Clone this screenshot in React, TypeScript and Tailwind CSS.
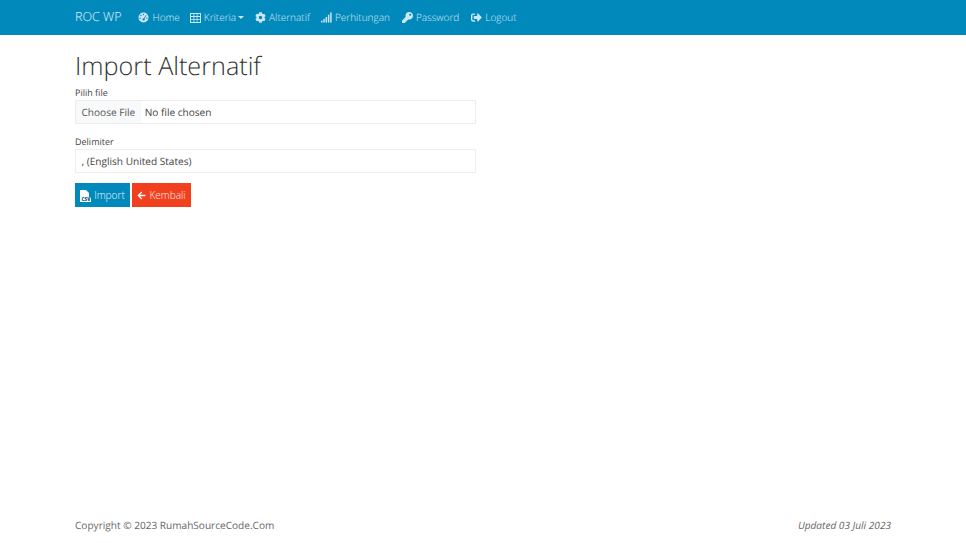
import { FaCog, FaKey, FaSignOutAlt, FaArrowLeft } from "react-icons/fa";
import type { ReactNode } from "react";

function GaugeIcon() {
  return (
    <svg viewBox="0 0 12 12" className="h-[11px] w-[11px]" fill="currentColor">
      <path fillRule="evenodd" d="M6 .5a5.5 5.5 0 1 1 0 11 5.5 5.5 0 0 1 0-11ZM6 2a.8.8 0 1 0 0 1.6A.8.8 0 0 0 6 2ZM3.2 3.1a.8.8 0 1 0 0 1.6.8.8 0 0 0 0-1.6ZM2.3 5.9a.8.8 0 1 0 0 1.6.8.8 0 0 0 0-1.6ZM9.7 5.9a.8.8 0 1 0 0 1.6.8.8 0 0 0 0-1.6ZM8.9 3 6.3 6.7a1.3 1.3 0 1 0 .9.5L9.4 3.3Z" />
    </svg>
  );
}

function GridIcon() {
  return (
    <svg viewBox="0 0 11 10" className="h-[10px] w-[11px]" fill="currentColor">
      <path fillRule="evenodd" d="M0 0h11v10H0ZM1 1v2h2.5V1ZM4.3 1v2h2.4V1ZM7.5 1v2H10V1ZM1 3.9v2h2.5v-2ZM4.3 3.9v2h2.4v-2ZM7.5 3.9v2H10v-2ZM1 6.8V9h2.5V6.8ZM4.3 6.8V9h2.4V6.8ZM7.5 6.8V9H10V6.8Z" />
    </svg>
  );
}

function BarsIcon() {
  return (
    <svg viewBox="0 0 12 11" className="h-[11px] w-[12px]" fill="currentColor">
      <rect x="0" y="9" width="1.6" height="2" />
      <rect x="2.5" y="7" width="1.6" height="4" />
      <rect x="5" y="5" width="1.6" height="6" />
      <rect x="7.5" y="2.5" width="1.6" height="8.5" />
      <rect x="10" y="0" width="1.6" height="11" />
    </svg>
  );
}

function CsvIcon() {
  return (
    <svg viewBox="0 0 11 12" className="h-[12px] w-[11px]">
      <path d="M0 0h6l3 3v9H0Z" fill="white" />
      <rect x="1" y="7.2" width="10" height="4.8" fill="white" />
      <text x="6" y="11.3" textAnchor="middle" fontSize="4.6" fontWeight="800" fill="#075f82">CSV</text>
    </svg>
  );
}

function NavItem({ icon, label, caret, className }: { icon: ReactNode; label: string; caret?: boolean; className?: string }) {
  return (
    <a className={`flex items-center text-[10px] font-light text-white/80 ${className ?? ""}`}>
      <span className="mr-[3px] flex w-[11px] justify-center text-[11px]">{icon}</span>
      {label}
      {caret && <span className="ml-[2px] mt-[-1px] h-0 w-0 border-x-[3.5px] border-t-[3.5px] border-x-transparent border-t-white/80" />}
    </a>
  );
}

export default function App() {
  return (
    <div className="flex h-[543px] flex-col bg-white text-[#444] [font-family:'Open_Sans',sans-serif] [text-rendering:geometricPrecision]">
      <nav className="flex h-[35px] items-center bg-[#0189bc] px-[75px]">
        <span className="mr-[17px] text-[12.5px] font-light text-white/90">ROC WP</span>
        <div className="flex items-center">
          <NavItem icon={<GaugeIcon />} label="Home" />
          <NavItem className="ml-[10px]" icon={<GridIcon />} label="Kriteria" caret />
          <NavItem className="ml-[11px]" icon={<FaCog />} label="Alternatif" />
          <NavItem className="ml-[11px]" icon={<BarsIcon />} label="Perhitungan" />
          <NavItem className="ml-[12px]" icon={<FaKey />} label="Password" />
          <NavItem className="ml-[12px]" icon={<FaSignOutAlt />} label="Logout" />
        </div>
      </nav>
      <main className="flex-1 px-[75px]">
        <h1 className="mt-[13px] text-[25.2px] leading-[36px] font-light text-[#333]">Import Alternatif</h1>
        <div className="w-[401px]">
          <label className="mt-[2px] block text-[9px] leading-[14px]">Pilih file</label>
          <div className="flex h-[24px] items-center border border-[#eeeeee] text-[10.08px]">
            <span className="flex h-full items-center bg-[#f8f9fa] px-[5.5px] pt-[1px] text-[#555]">Choose File</span>
            <span className="ml-[4px] pt-[1px]">No file chosen</span>
          </div>
          <label className="mt-[11px] block text-[9px] leading-[14px]">Delimiter</label>
          <div className="flex h-[24px] items-center border border-[#eeeeee] px-[5.5px] pt-[1px] text-[10.08px]">
            , (English United States)
          </div>
        </div>
        <div className="mt-[10px] flex gap-[2px]">
          <button className="flex h-[24px] w-[55px] items-center justify-center gap-[3px] bg-[#0189bc] pt-[1px] text-[10.08px] font-light text-white/90">
            <CsvIcon /> Import
          </button>
          <button className="flex h-[24px] w-[59px] items-center justify-center gap-[3px] bg-[#f2401f] pt-[1px] text-[10.08px] font-light text-white/90">
            <FaArrowLeft className="text-[9px] text-white" /> Kembali
          </button>
        </div>
      </main>
      <footer className="flex h-[25px] items-start justify-between px-[75px] text-[10.08px] leading-[14px] text-[#666]">
        <span>Copyright © 2023 RumahSourceCode.Com</span>
        <em>Updated 03 Juli 2023</em>
      </footer>
    </div>
  );
}
